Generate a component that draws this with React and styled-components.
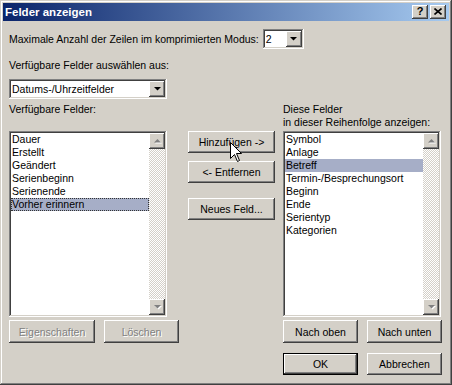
import React from 'react';
import styled, { createGlobalStyle } from 'styled-components';

const face = '#d4d0c8';

const GlobalStyle = createGlobalStyle`
  html, body {
    margin: 0;
    padding: 0;
    background: ${face};
  }
  body {
    font-family: 'Liberation Sans', Arial, sans-serif;
    font-size: 10.5px;
    color: #000;
  }
`;

const raised = `
  box-shadow: inset -1px -1px #404040, inset 1px 1px #fff,
    inset -2px -2px #808080, inset 2px 2px ${face};
`;

const sunken = `
  box-shadow: inset -1px -1px #fff, inset 1px 1px #808080,
    inset -2px -2px ${face}, inset 2px 2px #404040;
`;

const Window = styled.div`
  position: relative;
  width: 452px;
  height: 385px;
  box-sizing: border-box;
  padding: 3px;
  background: ${face};
  box-shadow: inset -1px -1px #404040, inset 1px 1px ${face},
    inset -2px -2px #808080, inset 2px 2px #fff;
  display: flex;
  flex-direction: column;
`;

const TitleBar = styled.div`
  height: 18px;
  display: flex;
  align-items: center;
  padding: 0 3px 0 2px;
  background: linear-gradient(to right, #0a246a, #a6caf0);
`;

const Title = styled.div`
  flex: 1;
  color: #fff;
  font-weight: bold;
  font-size: 11.5px;
`;

const CaptionButton = styled.div`
  width: 16px;
  height: 14px;
  box-sizing: border-box;
  margin-left: ${(p) => p.$gap || 0}px;
  background: ${face};
  ${raised}
  display: flex;
  align-items: center;
  justify-content: center;
  font-weight: bold;
  font-size: 11px;
  line-height: 1;
  padding-bottom: 1px;
`;

const Body = styled.div`
  flex: 1;
  display: flex;
  flex-direction: column;
  padding: 8px 7px 0 6px;
`;

const Row = styled.div`
  display: flex;
  align-items: center;
  gap: 4px;
  height: 20px;
`;

const Label = styled.div`
  line-height: 13px;
  margin-top: ${(p) => p.$top || 0}px;
  white-space: nowrap;
`;

const Combo = styled.div`
  width: ${(p) => p.$w}px;
  height: 20px;
  box-sizing: border-box;
  margin-top: ${(p) => p.$top || 0}px;
  padding: 2px;
  background: #fff;
  ${sunken}
  display: flex;
  align-items: center;
`;

const ComboValue = styled.div`
  flex: 1;
  padding-left: 1px;
  line-height: 16px;
  white-space: nowrap;
`;

const ArrowButton = styled.div`
  width: 16px;
  height: 16px;
  box-sizing: border-box;
  background: ${face};
  ${raised}
  display: flex;
  align-items: center;
  justify-content: center;
`;

const Main = styled.div`
  margin-top: 4px;
  display: grid;
  grid-template-columns: 171px 87px 159px;
  grid-template-rows: 28px 186px auto auto;
  column-gap: 8px;
`;

const Cell = styled.div`
  grid-column: ${(p) => p.$col};
  grid-row: ${(p) => p.$row};
  display: flex;
  flex-direction: ${(p) => (p.$stack ? 'column' : 'row')};
  justify-content: ${(p) => p.$justify || 'flex-start'};
  align-items: flex-start;
  gap: ${(p) => p.$gap || 0}px;
  margin-top: ${(p) => p.$top || 0}px;
`;

const ListBox = styled.div`
  width: 158px;
  height: 186px;
  box-sizing: border-box;
  padding: 2px;
  background: #fff;
  ${sunken}
  display: flex;
`;

const Items = styled.div`
  flex: 1;
`;

const Item = styled.div`
  height: 13px;
  line-height: 13px;
  padding-left: 1px;
  white-space: nowrap;
  background: ${(p) => (p.$selected ? '#a6aec7' : 'transparent')};
  outline: ${(p) => (p.$focus ? '1px dotted #333' : 'none')};
  outline-offset: -1px;
`;

const ScrollBar = styled.div`
  width: 16px;
  display: flex;
  flex-direction: column;
`;

const Track = styled.div`
  flex: 1;
  background-image: conic-gradient(${face} 25%, #fff 0 50%, ${face} 0 75%, #fff 0);
  background-size: 2px 2px;
`;

const Button = styled.div`
  width: ${(p) => p.$w}px;
  height: ${(p) => p.$h || 23}px;
  box-sizing: border-box;
  background: ${face};
  ${raised}
  border: ${(p) => (p.$default ? '1px solid #000' : 'none')};
  display: flex;
  align-items: center;
  justify-content: center;
  white-space: nowrap;
  color: ${(p) => (p.$disabled ? '#808080' : '#000')};
  text-shadow: ${(p) => (p.$disabled ? '1px 1px #fff' : 'none')};
`;

const Cursor = styled.svg`
  position: absolute;
  left: 230px;
  top: 142px;
`;

const Triangle = ({ down, color = '#000', disabled }) => (
  <svg width="7" height="4" viewBox="0 0 7 4" style={{ overflow: 'visible' }}>
    {disabled && (
      <path
        d={down ? 'M1 1h7L4.5 4.5z' : 'M4.5 1L8 4.5H1z'}
        fill="#fff"
      />
    )}
    <path d={down ? 'M0 0h7L3.5 3.5z' : 'M3.5 0L7 3.5H0z'} fill={color} />
  </svg>
);

const List = ({ items, selected, focus }) => (
  <ListBox>
    <Items>
      {items.map((it) => (
        <Item key={it} $selected={it === selected} $focus={focus && it === selected}>
          {it}
        </Item>
      ))}
    </Items>
    <ScrollBar>
      <ArrowButton>
        <Triangle color="#808080" disabled />
      </ArrowButton>
      <Track />
      <ArrowButton>
        <Triangle down color="#808080" disabled />
      </ArrowButton>
    </ScrollBar>
  </ListBox>
);

const available = ['Dauer', 'Erstellt', 'Geändert', 'Serienbeginn', 'Serienende', 'Vorher erinnern'];
const shown = [
  'Symbol',
  'Anlage',
  'Betreff',
  'Termin-/Besprechungsort',
  'Beginn',
  'Ende',
  'Serientyp',
  'Kategorien',
];

const App = () => {
  return (
    <>
      <GlobalStyle />
      <Window>
        <TitleBar>
          <Title>Felder anzeigen</Title>
          <CaptionButton>?</CaptionButton>
          <CaptionButton $gap={2}>
            <svg width="8" height="7" viewBox="0 0 8 7">
              <path d="M0.5 0.5L7.5 6.5M7.5 0.5L0.5 6.5" stroke="#000" strokeWidth="1.6" />
            </svg>
          </CaptionButton>
        </TitleBar>
        <Body>
          <Row>
            <Label>Maximale Anzahl der Zeilen im komprimierten Modus:</Label>
            <Combo $w={41}>
              <ComboValue>2</ComboValue>
              <ArrowButton>
                <Triangle down />
              </ArrowButton>
            </Combo>
          </Row>
          <Label $top={10}>Verfügbare Felder auswählen aus:</Label>
          <Combo $w={158} $top={7}>
            <ComboValue>Datums-/Uhrzeitfelder</ComboValue>
            <ArrowButton>
              <Triangle down />
            </ArrowButton>
          </Combo>
          <Main>
            <Cell $col={1} $row={1}>
              <Label>Verfügbare Felder:</Label>
            </Cell>
            <Cell $col={3} $row={1} $stack>
              <Label>Diese Felder</Label>
              <Label>in dieser Reihenfolge anzeigen:</Label>
            </Cell>
            <Cell $col={1} $row={2}>
              <List items={available} selected="Vorher erinnern" focus />
            </Cell>
            <Cell $col={2} $row={2} $stack>
              <Button $w={87} $h={22}>Hinzufügen -&gt;</Button>
              <Button $w={87} $h={22} style={{ marginTop: 8 }}>&lt;- Entfernen</Button>
              <Button $w={87} $h={22} style={{ marginTop: 15 }}>Neues Feld...</Button>
            </Cell>
            <Cell $col={3} $row={2}>
              <List items={shown} selected="Betreff" />
            </Cell>
            <Cell $col={1} $row={3} $gap={9} $top={3}>
              <Button $w={86} $disabled>Eigenschaften</Button>
              <Button $w={75} $disabled>Löschen</Button>
            </Cell>
            <Cell $col={3} $row={3} $gap={9} $top={3} $justify="flex-end">
              <Button $w={75}>Nach oben</Button>
              <Button $w={75}>Nach unten</Button>
            </Cell>
            <Cell $col={3} $row={4} $gap={9} $top={10} $justify="flex-end">
              <Button $w={75} $h={22} $default>OK</Button>
              <Button $w={75} $h={22}>Abbrechen</Button>
            </Cell>
          </Main>
        </Body>
        <Cursor width="13" height="21" viewBox="0 0 13 21">
          <path
            d="M0.5 0.5V16.5L4.5 12.5L7.5 19.5L9.5 18.5L6.5 11.5H11.5Z"
            fill="#fff"
            stroke="#000"
            strokeWidth="1"
            strokeLinejoin="miter"
          />
        </Cursor>
      </Window>
    </>
  );
};

export default App;
